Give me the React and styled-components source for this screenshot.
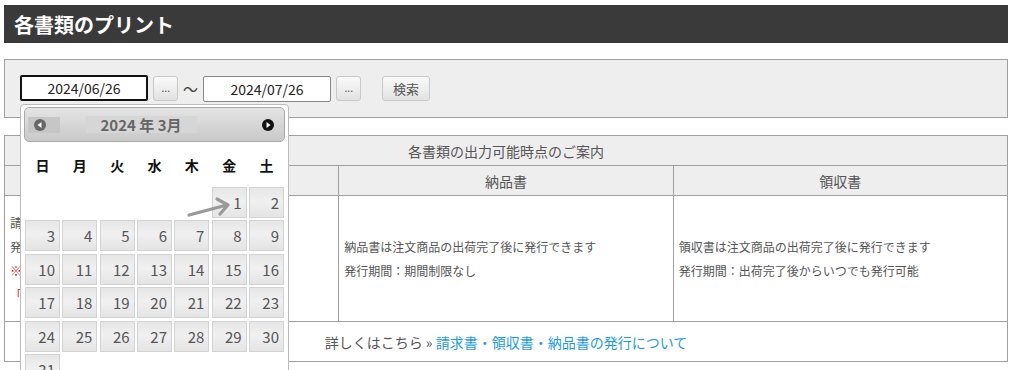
import React from "react";
import styled, { createGlobalStyle } from "styled-components";

const GlobalStyle = createGlobalStyle`
  body {
    margin: 0;
    background: #fff;
    font-family: "Noto Sans CJK JP", "Noto Sans", sans-serif;
    color: #555;
  }
`;

const Page = styled.div`
  min-height: 400px;
  padding: 5px 4px 0;
`;

const TitleBar = styled.h1`
  margin: 0;
  height: 38px;
  padding: 0 10px;
  display: flex;
  align-items: center;
  background: #3a3a3a;
  color: #fff;
  font-size: 20px;
  font-weight: bold;
`;

const SearchPanel = styled.div`
  margin-top: 16px;
  border: 1px solid #a0a0a0;
  background: #eee;
  padding: 15px 15px 0;
  box-sizing: border-box;
  height: 59px;
  display: flex;
  align-items: flex-start;
`;

const DateField = styled.div`
  position: relative;
  display: flex;
`;

const DateInput = styled.input`
  width: 128px;
  height: 26px;
  box-sizing: border-box;
  border: ${(p) => (p.$focused ? "2px solid #111" : "1px solid #888")};
  border-radius: 2px;
  background: #fff;
  text-align: center;
  font-family: inherit;
  font-size: 14px;
  color: #222;
  margin-top: ${(p) => (p.$focused ? "0" : "1px")};
  outline: none;
`;

const DotButton = styled.button`
  width: 25px;
  height: 25px;
  margin: 1px 0 0 5px;
  padding: 0 0 2px;
  border: 1px solid #c8c8c8;
  border-radius: 3px;
  background: linear-gradient(#fafafa, #e2e2e2);
  color: #555;
  font-size: 12px;
  font-family: "Liberation Sans", sans-serif;
  letter-spacing: -0.5px;
`;

const Tilde = styled.span`
  width: 25px;
  text-align: center;
  line-height: 28px;
  font-size: 15px;
  color: #444;
`;

const SearchButton = styled.button`
  width: 48px;
  height: 25px;
  margin: 1px 0 0 21px;
  border: 1px solid #c8c8c8;
  border-radius: 3px;
  background: linear-gradient(#fafafa, #e2e2e2);
  color: #555;
  font-size: 13px;
  font-family: inherit;
`;

const Calendar = styled.div`
  position: absolute;
  top: 29px;
  left: 0;
  z-index: 5;
  width: 269px;
  height: 320px;
  box-sizing: border-box;
  padding: 2px 3px 0 4px;
  background: #fff;
  border: 1px solid #bbb;
  border-radius: 4px;
`;

const CalHeader = styled.div`
  height: 35px;
  margin-left: -1px;
  box-sizing: border-box;
  border: 1px solid #aaa;
  border-radius: 5px;
  background: linear-gradient(#e4e4e4, #c9c9c9);
  display: flex;
  align-items: center;
  justify-content: space-between;
  padding: 0 10px 0 3px;
`;

const NavBox = styled.span`
  width: 32px;
  height: 16px;
  display: flex;
  align-items: center;
  padding-left: 6px;
  box-sizing: border-box;
  background: ${(p) => (p.$hover ? "#c6c6c6" : "transparent")};
`;

const MonthTitle = styled.span`
  width: 111px;
  height: 17px;
  margin-right: 40px;
  background: #d6d6d6;
  color: #666;
  font-size: 15px;
  font-weight: bold;
  line-height: 17px;
  text-align: center;
`;

const WeekRow = styled.div`
  display: grid;
  grid-template-columns: repeat(7, 35px);
  column-gap: 2.33px;
  height: 44px;
  align-items: center;
  margin-top: 1px;
`;

const WeekDay = styled.span`
  text-align: center;
  font-size: 14px;
  font-weight: bold;
  color: #111;
`;

const DayGrid = styled.div`
  position: relative;
  display: grid;
  grid-template-columns: repeat(7, 35px);
  grid-auto-rows: 31px;
  column-gap: 2.33px;
  row-gap: 2.4px;
`;

const DayCell = styled.span`
  box-sizing: border-box;
  border: 1px solid #d3d3d3;
  background: linear-gradient(#e6e6e6 0%, #f0f0f0 45%, #e4e4e4 100%);
  color: #555;
  font-size: 15px;
  text-align: right;
  padding-right: 4px;
  line-height: 29px;
  grid-column: ${(p) => p.$col || "auto"};
`;

const Pointer = styled.svg`
  position: absolute;
  left: 162px;
  top: 6px;
`;

const InfoTable = styled.table`
  width: 100%;
  margin-top: 17px;
  border-collapse: collapse;
  table-layout: fixed;
  font-size: 12px;
  color: #555;

  th,
  td {
    border: 1px solid #a0a0a0;
    padding: 0;
  }
`;

const HeadCell = styled.th`
  height: 29px;
  background: #eee;
  font-size: 14px;
  font-weight: normal;
  color: #555;
`;

const BodyCell = styled.td`
  height: 125px;
  && {
    padding: 0 5px;
  }
  vertical-align: middle;
  line-height: 24px;
`;

const Note = styled.div`
  color: ${(p) => (p.$red ? "#e02020" : "inherit")};
`;

const FootCell = styled.td`
  height: 39px;
  text-align: center;
  font-size: 14px;
`;

const FootLink = styled.a`
  color: #1a9be6;
  text-decoration: none;
`;

function NavIcon({ dir, color }) {
  return (
    <svg width="12" height="12" viewBox="0 0 12 12">
      <circle cx="6" cy="6" r="6" fill={color} />
      {dir === "prev" ? (
        <polygon points="7.5,3 3.5,6 7.5,9" fill="#fff" />
      ) : (
        <polygon points="4.5,3 8.5,6 4.5,9" fill="#fff" />
      )}
    </svg>
  );
}

const weekDays = ["日", "月", "火", "水", "木", "金", "土"];
const days = Array.from({ length: 31 }, (_, i) => i + 1);

function DatePicker() {
  return (
    <Calendar>
      <CalHeader>
        <NavBox $hover>
          <NavIcon dir="prev" color="#666" />
        </NavBox>
        <MonthTitle>2024 年 3月</MonthTitle>
        <NavIcon dir="next" color="#111" />
      </CalHeader>
      <WeekRow>
        {weekDays.map((d) => (
          <WeekDay key={d}>{d}</WeekDay>
        ))}
      </WeekRow>
      <DayGrid>
        {days.map((d) => (
          <DayCell key={d} $col={d === 1 ? 6 : undefined}>
            {d}
          </DayCell>
        ))}
        <Pointer width="50" height="26" viewBox="0 0 50 26">
          <path
            d="M2 22 L40 12 M30 6 L41 12 L33 21"
            stroke="#9a9a9a"
            strokeWidth="3.2"
            fill="none"
            strokeLinecap="round"
            strokeLinejoin="round"
          />
        </Pointer>
      </DayGrid>
    </Calendar>
  );
}

export default function App() {
  return (
    <Page>
      <GlobalStyle />
      <TitleBar>各書類のプリント</TitleBar>
      <SearchPanel>
        <DateField>
          <DateInput $focused defaultValue="2024/06/26" />
          <DatePicker />
        </DateField>
        <DotButton>...</DotButton>
        <Tilde>〜</Tilde>
        <DateInput defaultValue="2024/07/26" />
        <DotButton>...</DotButton>
        <SearchButton>検索</SearchButton>
      </SearchPanel>
      <InfoTable>
        <thead>
          <tr>
            <HeadCell colSpan={3}>各書類の出力可能時点のご案内</HeadCell>
          </tr>
          <tr>
            <HeadCell>請求書</HeadCell>
            <HeadCell>納品書</HeadCell>
            <HeadCell>領収書</HeadCell>
          </tr>
        </thead>
        <tbody>
          <tr>
            <BodyCell>
              <Note>請求書は注文商品の出荷完了後に発行できます</Note>
              <Note>発行期間：出荷完了後から3ヶ月以内</Note>
              <Note $red>※期間を過ぎた請求書は発行できません</Note>
              <Note $red>「お問い合わせ」よりご連絡ください</Note>
            </BodyCell>
            <BodyCell>
              <Note>納品書は注文商品の出荷完了後に発行できます</Note>
              <Note>発行期間：期間制限なし</Note>
            </BodyCell>
            <BodyCell>
              <Note>領収書は注文商品の出荷完了後に発行できます</Note>
              <Note>発行期間：出荷完了後からいつでも発行可能</Note>
            </BodyCell>
          </tr>
          <tr>
            <FootCell colSpan={3}>
              詳しくはこちら »{" "}
              <FootLink href="#">請求書・領収書・納品書の発行について</FootLink>
            </FootCell>
          </tr>
        </tbody>
      </InfoTable>
    </Page>
  );
}
